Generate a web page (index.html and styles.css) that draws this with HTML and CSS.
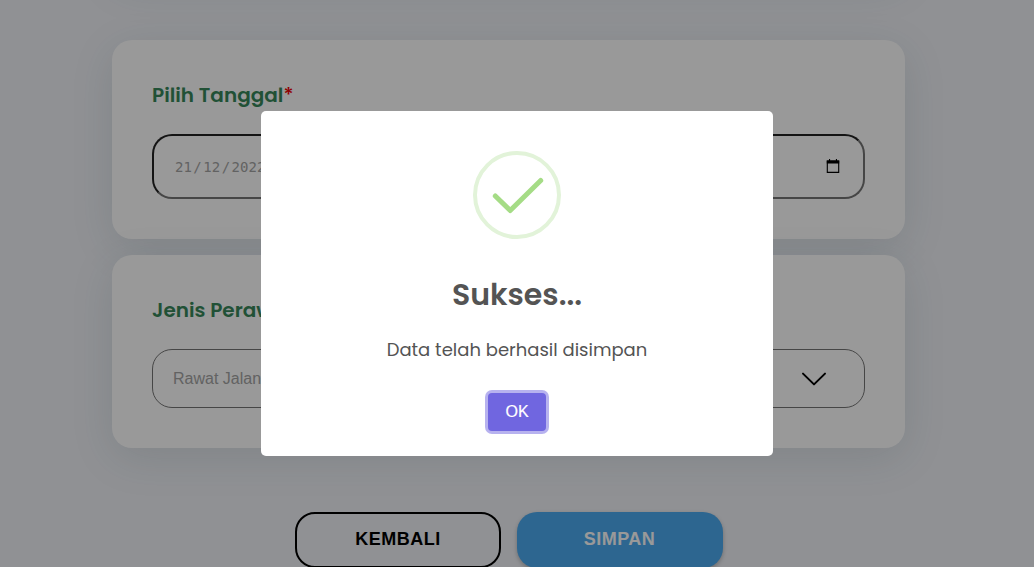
FILE: index.html
```html
<!DOCTYPE html>
<html lang="id">
<head>
<meta charset="utf-8">
<title>Form Pendaftaran</title>
<link rel="stylesheet" href="styles.css">
</head>
<body>
<main class="page">
  <section class="card card-previous"></section>
  <section class="card card-date">
    <div class="label">Pilih Tanggal<span class="required">*</span></div>
    <div class="date-input">
      <span class="date-value"><span>21</span><span>/</span><span>12</span><span>/</span><span>2022</span></span>
      <svg class="calendar" width="14" height="15" viewBox="0 0 14 15"><path d="M1.3 2h11.4v11.4H1.3z" fill="none" stroke="#000" stroke-width="1.1"/><path d="M.8 1.4h12.4v3H.8zM3 .1h1.1v2H3zM9.9.1H11v2H9.9z"/></svg>
    </div>
  </section>
  <section class="card card-care">
    <div class="label">Jenis Perawatan<span class="required">*</span></div>
    <div class="select">
      <span>Rawat Jalan</span>
      <svg class="chevron" width="26" height="14" viewBox="0 0 26 14"><path d="M2 1.6l11 10.8L24 1.6" fill="none" stroke="#000" stroke-width="2" stroke-linecap="round" stroke-linejoin="round"/></svg>
    </div>
  </section>
  <div class="actions">
    <button class="btn btn-back">KEMBALI</button>
    <button class="btn btn-save">SIMPAN</button>
  </div>
</main>
<div class="overlay">
  <div class="modal" role="dialog">
    <svg class="success" width="88" height="88" viewBox="0 0 88 88"><circle cx="44" cy="44" r="42" fill="none" stroke="#e2f3d9" stroke-width="4"/><path d="M22.3 45L37.2 59.5L67.7 29.5" fill="none" stroke="#a5dc86" stroke-width="5" stroke-linecap="round" stroke-linejoin="round"/></svg>
    <h2 class="title">Sukses...</h2>
    <p class="message"><span>Data telah berhasil disimpan</span></p>
    <button class="ok">OK</button>
  </div>
</div>
</body>
</html>
```
FILE: styles.css
```css
* { box-sizing: border-box; }
body {
  margin: 0;
  height: 567px;
  overflow: hidden;
  background: #f0f2f7;
  font-family: "Liberation Sans", Arial, sans-serif;
}
.page {
  width: 793px;
  height: 567px;
  margin-left: 112px;
}
.card {
  padding: 40px;
  border-radius: 20px;
  background: #fff;
  box-shadow: 0 10px 44px rgba(30, 75, 85, .12);
}
.card-previous { height: 200px; margin-top: -224px; margin-bottom: 64px; }
.card-date { height: 199px; margin-bottom: 16px; }
.card-care { height: 193px; }
.label {
  height: 30px;
  margin-bottom: 24px;
  font: 600 20px/30px Poppins, Inter, sans-serif;
  color: #38885a;
}
.required { font-weight: 500; color: #f00000; }
.date-input {
  display: flex;
  align-items: center;
  justify-content: space-between;
  height: 65px;
  padding: 0 23px 0 21px;
  border: 2px solid;
  border-color: #222 #767676 #767676 #222;
  border-radius: 20px;
}
.date-value {
  display: flex;
  gap: 1.5px;
  padding-top: 1px;
  font: 14px "DejaVu Sans Mono", monospace;
  color: #a4a4a4;
}
.calendar { margin-bottom: 1px; }
.select {
  display: flex;
  align-items: center;
  justify-content: space-between;
  height: 59px;
  padding: 0 37px 0 20px;
  border: 1px solid #767676;
  border-radius: 20px;
  font-size: 16px;
  color: #a4a4a4;
}
.actions {
  display: flex;
  gap: 16px;
  margin: 64px 0 0 183px;
}
.btn {
  width: 206px;
  height: 56px;
  padding: 0 0 1px;
  border: 0;
  border-radius: 20px;
  font: bold 18px "Liberation Sans", Arial, sans-serif;
  letter-spacing: .5px;
}
.btn-back { border: 2px solid #000; background: transparent; color: #000; }
.btn-save {
  padding-right: 1px;
  background: #4caaf0;
  color: #fff;
  box-shadow: 0 2px 4px rgba(0, 0, 0, .25);
}
.overlay {
  position: fixed;
  inset: 0;
  display: flex;
  align-items: center;
  justify-content: center;
  background: rgba(0, 0, 0, .4);
}
.modal {
  display: flex;
  flex-direction: column;
  align-items: center;
  width: 512px;
  height: 345px;
  padding-top: 40px;
  border-radius: 5px;
  background: #fff;
  color: #545454;
}
.title {
  margin: 33px 0 0;
  font: 600 30px/45px Poppins, Inter, sans-serif;
}
.message {
  margin: 19px 0 0;
  font: 18px/28px Poppins, Inter, sans-serif;
  white-space: nowrap;
}
.ok {
  width: 58px;
  height: 38px;
  margin-top: 29px;
  padding: 0;
  border: 0;
  border-radius: 4px;
  background: #7066e0;
  box-shadow: 0 0 0 3px rgba(112, 102, 224, .5);
  color: #fff;
  font: 16px "Liberation Sans", Arial, sans-serif;
  -webkit-text-stroke: .2px #fff;
}
```
